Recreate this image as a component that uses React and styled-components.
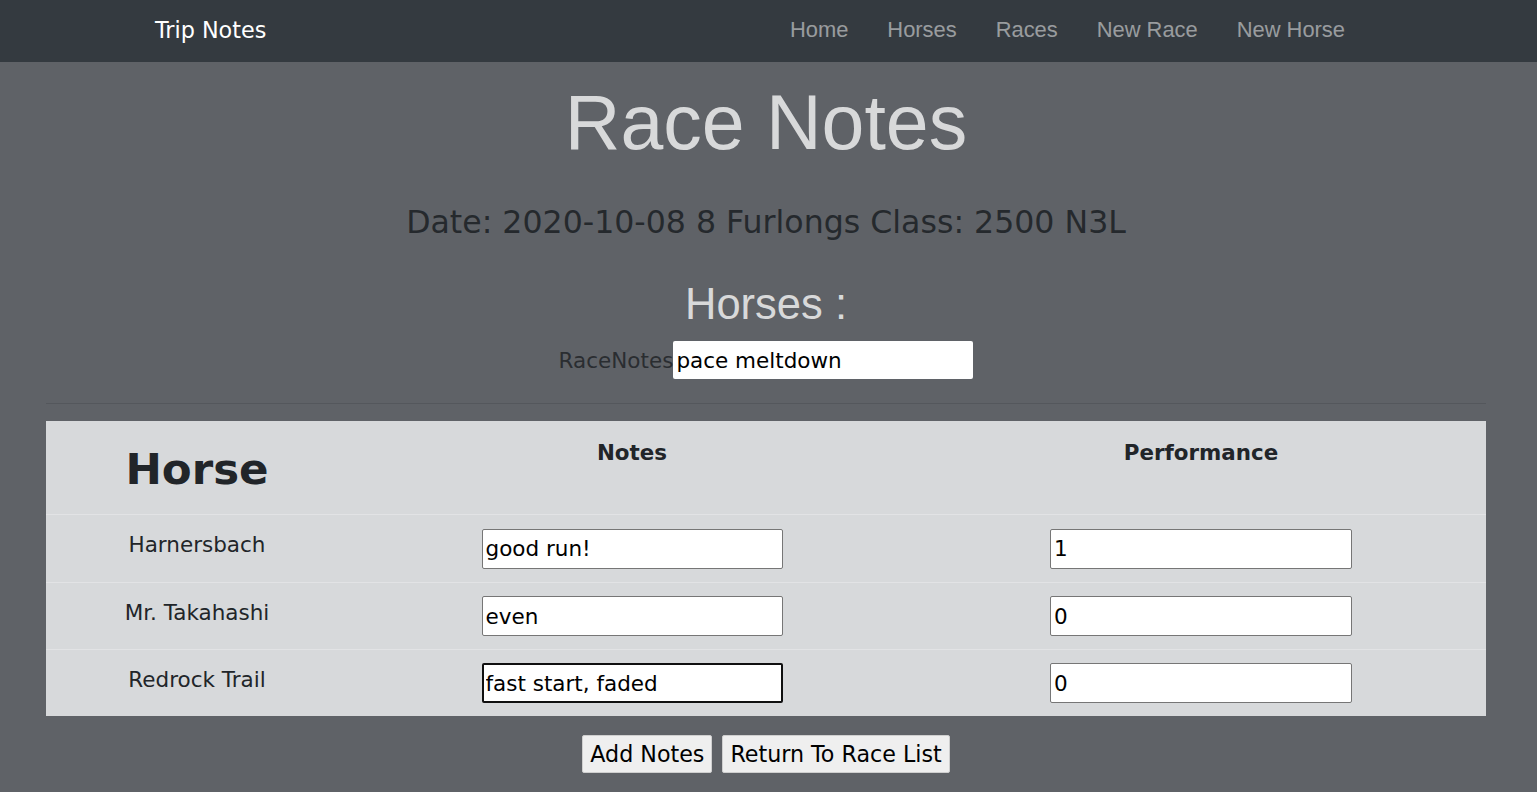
import React, { useState } from 'react';
import styled, { createGlobalStyle } from 'styled-components';

const GlobalStyle = createGlobalStyle`
  html, body {
    margin: 0;
    padding: 0;
    background: #5f6267;
    font-family: 'DejaVu Sans', Verdana, sans-serif;
  }
`;

const NavBar = styled.nav`
  display: flex;
  align-items: center;
  justify-content: space-between;
  height: 62px;
  background: #343a40;
  padding: 0 192px 0 155px;
`;

const Brand = styled.a`
  color: #ffffff;
  font-size: 22.3px;
  text-decoration: none;
  margin-top: -2px;
`;

const NavLinks = styled.ul`
  display: flex;
  gap: 39px;
  list-style: none;
  margin: 0;
  padding: 0;
  > li {
    font-family: 'Liberation Sans', Arial, sans-serif;
    font-size: 21.9px;
    color: rgba(255, 255, 255, 0.5);
    margin-top: -2px;
  }
`;

const Main = styled.main`
  display: flex;
  flex-direction: column;
  align-items: center;
  padding: 0 51px 0 46px;
`;

const Title = styled.h1`
  font-family: 'Liberation Sans', Arial, sans-serif;
  font-weight: normal;
  font-size: 77px;
  color: #d8d9da;
  margin: 14px 0 0 0;
  line-height: 1.2;
`;

const RaceInfo = styled.h3`
  font-weight: normal;
  font-size: 31.6px;
  color: #25292d;
  margin: 36px 0 0 0;
  line-height: 1.2;
`;

const SubTitle = styled.h2`
  font-family: 'Liberation Sans', Arial, sans-serif;
  font-weight: normal;
  font-size: 43.5px;
  color: #d8d9da;
  margin: 36px 0 0 0;
  line-height: 1.2;
`;

const NotesRow = styled.label`
  display: flex;
  align-items: center;
  font-size: 21.5px;
  color: #2a2d31;
  margin: 11px 0 0 0;
`;

const TextBox = styled.input`
  box-sizing: border-box;
  width: ${p => p.$width || '301px'};
  height: ${p => p.$height || '40px'};
  font-family: 'DejaVu Sans', Verdana, sans-serif;
  font-size: 21.5px;
  color: #000;
  background: #fff;
  padding: 0 3px;
  border: ${p => (p.$bare ? 'none' : '1px solid #767676')};
  border-radius: 2px;
  outline: none;
  &:focus {
    border: 2px solid #101010;
    padding: 0 2px;
  }
`;

const Rule = styled.hr`
  align-self: stretch;
  border: none;
  border-top: 1px solid #54575c;
  margin: 24px 0 17px 0;
`;

const Table = styled.div`
  align-self: stretch;
  display: grid;
  grid-template-columns: 302px 568px 1fr;
  background: #d7d9db;
`;

const HeadCell = styled.div`
  display: flex;
  justify-content: center;
  align-items: ${p => (p.$big ? 'center' : 'flex-start')};
  height: 94px;
  font-weight: bold;
  font-size: ${p => (p.$big ? '43.5px' : '21.4px')};
  color: #212529;
  padding-top: ${p => (p.$big ? '2px' : '19px')};
  box-sizing: border-box;
  border-bottom: 1px solid #e2e3e5;
`;

const Cell = styled.div`
  display: flex;
  justify-content: center;
  align-items: ${p => (p.$text ? 'flex-start' : 'center')};
  height: 67px;
  box-sizing: border-box;
  padding-top: ${p => (p.$text ? '17px' : '0')};
  font-size: 21.5px;
  color: #212529;
  border-top: ${p => (p.$first ? 'none' : '1px solid #e2e3e5')};
`;

const Actions = styled.div`
  display: flex;
  gap: 10px;
  margin-top: 19px;
`;

const Button = styled.button`
  font-family: 'DejaVu Sans', Verdana, sans-serif;
  font-size: 22.2px;
  color: #000;
  background: #efefef;
  border: 1px solid #cfcfcf;
  border-radius: 2px;
  height: 38px;
  padding: 0 7px;
`;

const horses = [
  { name: 'Harnersbach', notes: 'good run!', perf: '1' },
  { name: 'Mr. Takahashi', notes: 'even', perf: '0' },
  { name: 'Redrock Trail', notes: 'fast start, faded', perf: '0', focus: true },
];

export default function App() {
  const [raceNotes, setRaceNotes] = useState('pace meltdown');
  const [rows, setRows] = useState(horses);

  const update = (i, key, value) =>
    setRows(rows.map((r, idx) => (idx === i ? { ...r, [key]: value } : r)));

  return (
    <>
      <GlobalStyle />
      <NavBar>
        <Brand href="#">Trip Notes</Brand>
        <NavLinks>
          <li>Home</li>
          <li>Horses</li>
          <li>Races</li>
          <li>New Race</li>
          <li>New Horse</li>
        </NavLinks>
      </NavBar>
      <Main>
        <Title>Race Notes</Title>
        <RaceInfo>Date: 2020-10-08 8 Furlongs Class: 2500 N3L</RaceInfo>
        <SubTitle>Horses :</SubTitle>
        <NotesRow>
          RaceNotes
          <TextBox
            $bare
            $width="300px"
            $height="38px"
            value={raceNotes}
            onChange={e => setRaceNotes(e.target.value)}
          />
        </NotesRow>
        <Rule />
        <Table>
          <HeadCell $big>Horse</HeadCell>
          <HeadCell>Notes</HeadCell>
          <HeadCell>Performance</HeadCell>
          {rows.map((h, i) => (
            <React.Fragment key={h.name}>
              <Cell $text $first={i === 0}>{h.name}</Cell>
              <Cell $first={i === 0}>
                <TextBox
                  value={h.notes}
                  autoFocus={h.focus}
                  onChange={e => update(i, 'notes', e.target.value)}
                />
              </Cell>
              <Cell $first={i === 0}>
                <TextBox
                  $width="302px"
                  value={h.perf}
                  onChange={e => update(i, 'perf', e.target.value)}
                />
              </Cell>
            </React.Fragment>
          ))}
        </Table>
        <Actions>
          <Button>Add Notes</Button>
          <Button>Return To Race List</Button>
        </Actions>
      </Main>
    </>
  );
}
